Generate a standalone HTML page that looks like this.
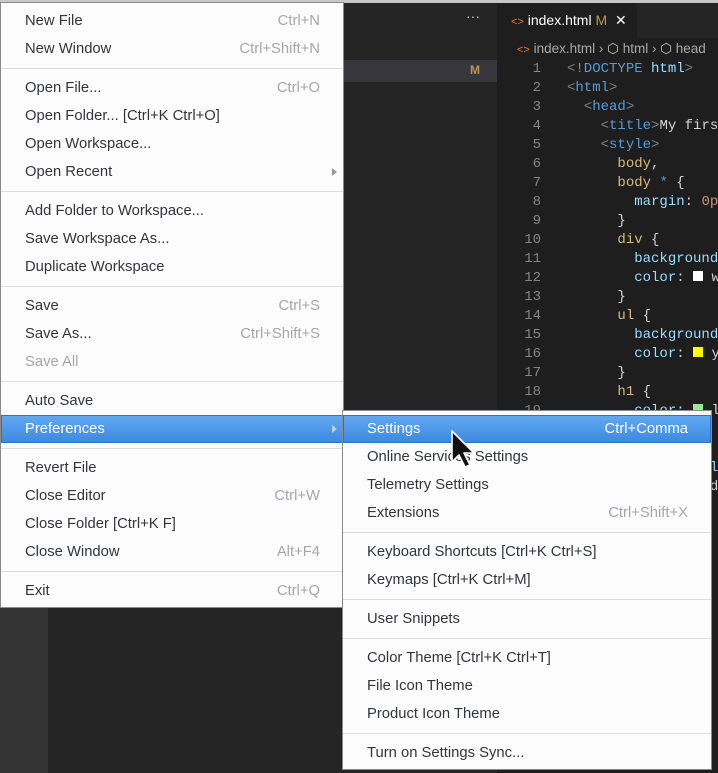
<!DOCTYPE html>
<html><head><style>
*{margin:0;padding:0;box-sizing:border-box}
body{width:718px;height:773px;overflow:hidden;background:#1e1e1e;position:relative;font-family:"Liberation Sans",sans-serif}
.abs{position:absolute}
.menu{position:absolute;background:#fcfcfc;border:1px solid #8a8a8a;padding-top:4px}
.it{height:28px;line-height:28px;font-size:14.8px;color:#31363b;padding-left:24px;position:relative;white-space:nowrap}
.it .k{position:absolute;right:23px;top:0;color:#a3a7ab}
.sep{height:11px;position:relative}
.sep:after{content:"";position:absolute;left:0;right:0;top:5px;height:1px;background:#dcdcdc}
.hl{background:linear-gradient(#63a9f1,#3b88df);color:#fff;outline:1px solid #2e72c6;outline-offset:-1px}
.hl .k{color:#fff}
.arr{position:absolute;right:6px;top:10px;width:0;height:0;border-left:5px solid #999;border-top:4px solid transparent;border-bottom:4px solid transparent}
.clip{position:absolute;left:497px;top:38px;width:221px;height:735px;overflow:hidden}
.code{position:absolute;left:0;top:22px;font-family:"Liberation Mono",monospace;font-size:14px;line-height:19px;color:#d4d4d4;white-space:pre}
.ln{display:inline-block;width:44px;text-align:right;color:#858585;margin-right:26px}
.t{color:#808080}.n{color:#569cd6}.s{color:#d7ba7d}.p{color:#9cdcfe}.v{color:#ce9178}
</style></head><body>
<div class="abs" style="left:0;top:0;width:718px;height:3px;background:#c8c8c8"></div>
<div class="abs" style="left:0;top:3px;width:48px;height:770px;background:#333"></div>
<div class="abs" style="left:48px;top:3px;width:449px;height:770px;background:#252526"></div>
<div class="abs" style="left:344px;top:60px;width:153px;height:22px;background:#37373d"></div>
<div class="abs" style="left:470px;top:63px;color:#c09553;font-size:12px;font-weight:bold">M</div>
<div class="abs" style="left:466px;top:8px;color:#ccc;font-size:14px">···</div>
<div class="abs" style="left:497px;top:3px;width:221px;height:35px;background:#252526"></div>
<div class="abs" style="left:497px;top:3px;width:140px;height:35px;background:#1e1e1e"></div>
<div class="abs" style="left:511px;top:12px;font-size:14px;color:#fff;white-space:nowrap"><span style="color:#e37933;font-size:11px">&lt;&gt;</span> index.html <span style="color:#c09553">M</span> <span style="margin-left:4px">✕</span></div>
<div class="abs" style="left:517px;top:41px;font-size:13.5px;color:#a9a9a9;white-space:nowrap;width:201px;overflow:hidden"><span style="color:#e37933;font-size:11px">&lt;&gt;</span> index.html › <span style="color:#ccc">⬡</span> html › <span style="color:#ccc">⬡</span> head</div>
<div class="clip"><div class="code"><span class="ln">1</span><span class="t">&lt;</span><span class="n">!DOCTYPE</span> <span class="p">html</span><span class="t">&gt;</span>
<span class="ln">2</span><span class="t">&lt;</span><span class="n">html</span><span class="t">&gt;</span>
<span class="ln">3</span>  <span class="t">&lt;</span><span class="n">head</span><span class="t">&gt;</span>
<span class="ln">4</span>    <span class="t">&lt;</span><span class="n">title</span><span class="t">&gt;</span>My first page
<span class="ln">5</span>    <span class="t">&lt;</span><span class="n">style</span><span class="t">&gt;</span>
<span class="ln">6</span>      <span class="s">body</span>,
<span class="ln">7</span>      <span class="s">body</span> <span class="n">*</span> {
<span class="ln">8</span>        <span class="p">margin</span>: <span class="v">0px</span>;
<span class="ln">9</span>      }
<span class="ln">10</span>      <span class="s">div</span> {
<span class="ln">11</span>        <span class="p">background</span>: red;
<span class="ln">12</span>        <span class="p">color</span>: <span style="display:inline-block;width:10px;height:10px;background:#fff"></span> white;
<span class="ln">13</span>      }
<span class="ln">14</span>      <span class="s">ul</span> {
<span class="ln">15</span>        <span class="p">background</span>: blue;
<span class="ln">16</span>        <span class="p">color</span>: <span style="display:inline-block;width:10px;height:10px;background:#ff0"></span> yellow;
<span class="ln">17</span>      }
<span class="ln">18</span>      <span class="s">h1</span> {
<span class="ln">19</span>        <span class="p">color</span>: <span style="display:inline-block;width:10px;height:10px;background:#90ee90"></span> lightgreen;
<span class="ln">20</span>      }
<span class="ln">21</span>      <span class="s">li</span> {
<span class="ln">22</span>        <span class="p">font-family</span>: y;
<span class="ln">23</span>        <span class="p">display</span>: d;
<span class="ln">24</span>      }
<span class="ln">25</span>          "
<span class="ln">26</span>          (
<span class="ln">27</span>
<span class="ln">28</span>
<span class="ln">29</span>
<span class="ln">30</span>          t
<span class="ln">31</span>
<span class="ln">32</span>
<span class="ln">33</span>
<span class="ln">34</span>
<span class="ln">35</span>          L
<span class="ln">36</span>      <span class="t">&lt;/</span><span class="n">ul</span><span class="t">&gt;</span></div></div>

<div class="menu" style="left:0;top:2px;width:344px;height:606px">
<div class="it">New File<span class="k">Ctrl+N</span></div>
<div class="it">New Window<span class="k">Ctrl+Shift+N</span></div>
<div class="sep"></div>
<div class="it">Open File...<span class="k">Ctrl+O</span></div>
<div class="it">Open Folder... [Ctrl+K Ctrl+O]</div>
<div class="it">Open Workspace...</div>
<div class="it">Open Recent<span class="arr"></span></div>
<div class="sep"></div>
<div class="it">Add Folder to Workspace...</div>
<div class="it">Save Workspace As...</div>
<div class="it">Duplicate Workspace</div>
<div class="sep"></div>
<div class="it">Save<span class="k">Ctrl+S</span></div>
<div class="it">Save As...<span class="k">Ctrl+Shift+S</span></div>
<div class="it" style="color:#a3a7ab">Save All</div>
<div class="sep"></div>
<div class="it">Auto Save</div>
<div class="it hl">Preferences<span class="arr" style="border-left-color:#ccc"></span></div>
<div class="sep"></div>
<div class="it">Revert File</div>
<div class="it">Close Editor<span class="k">Ctrl+W</span></div>
<div class="it">Close Folder [Ctrl+K F]</div>
<div class="it">Close Window<span class="k">Alt+F4</span></div>
<div class="sep"></div>
<div class="it">Exit<span class="k">Ctrl+Q</span></div>
</div>

<div class="menu" style="left:342px;top:410px;width:370px;height:360px">
<div class="it hl">Settings<span class="k">Ctrl+Comma</span></div>
<div class="it">Online Services Settings</div>
<div class="it">Telemetry Settings</div>
<div class="it">Extensions<span class="k">Ctrl+Shift+X</span></div>
<div class="sep"></div>
<div class="it">Keyboard Shortcuts [Ctrl+K Ctrl+S]</div>
<div class="it">Keymaps [Ctrl+K Ctrl+M]</div>
<div class="sep"></div>
<div class="it">User Snippets</div>
<div class="sep"></div>
<div class="it">Color Theme [Ctrl+K Ctrl+T]</div>
<div class="it">File Icon Theme</div>
<div class="it">Product Icon Theme</div>
<div class="sep"></div>
<div class="it">Turn on Settings Sync...</div>
</div>

<svg class="abs" style="left:450px;top:429px" width="28" height="42" viewBox="0 0 28 42">
<path d="M2 2 L2 33 L9 26 L15 38 L20 36 L14 24 L24 24 Z" fill="#111" stroke="#fff" stroke-width="1.6" stroke-linejoin="round"/>
</svg>
</body></html>
